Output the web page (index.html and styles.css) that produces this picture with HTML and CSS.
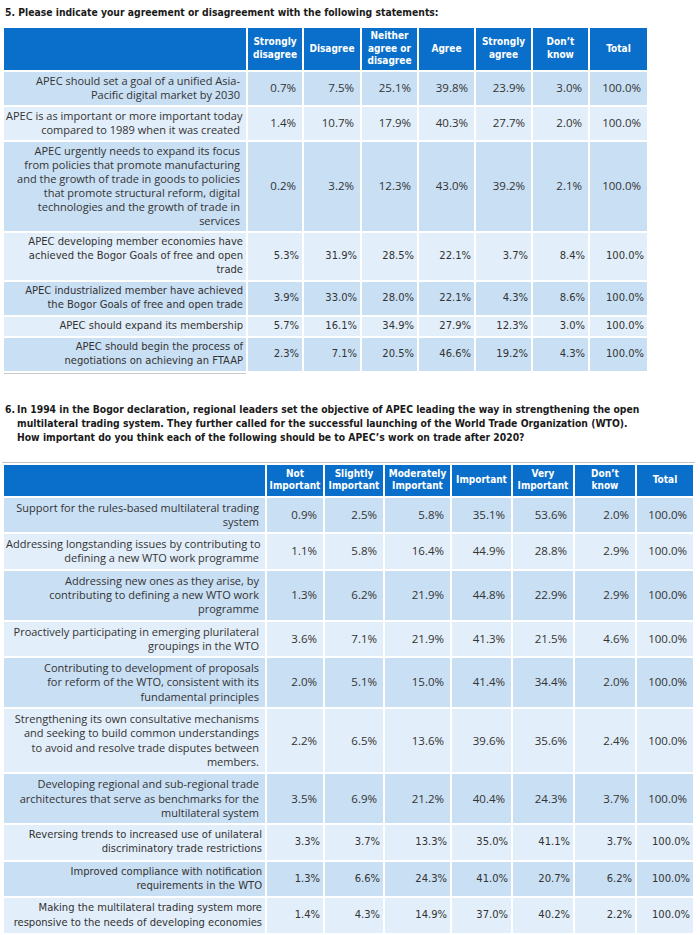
FILE: index.html
```html
<!DOCTYPE html>
<html>
<head>
<meta charset="utf-8">
<link rel="stylesheet" href="styles.css">
</head>
<body>
<h2 class="q-title q5">5. Please indicate your agreement or disagreement with the following statements:</h2>
<table class="survey t1">
  <colgroup>
    <col class="c-label1"><col style="width:54px"><col style="width:56px"><col style="width:55px"><col style="width:55px"><col style="width:55px"><col style="width:55px"><col style="width:57px">
  </colgroup>
  <thead>
    <tr class="head">
      <th></th><th>Strongly<br>disagree</th><th>Disagree</th><th>Neither<br>agree or<br>disagree</th><th>Agree</th><th>Strongly<br>agree</th><th>Don’t<br>know</th><th>Total</th>
    </tr>
  </thead>
  <tbody>
    <tr class="dk"><td class="lbl">APEC should set a goal of a unified Asia-<br>Pacific digital market by 2030</td><td>0.7%</td><td>7.5%</td><td>25.1%</td><td>39.8%</td><td>23.9%</td><td>3.0%</td><td>100.0%</td></tr>
    <tr class="lt"><td class="lbl">APEC is as important or more important today<br>compared to 1989 when it was created</td><td>1.4%</td><td>10.7%</td><td>17.9%</td><td>40.3%</td><td>27.7%</td><td>2.0%</td><td>100.0%</td></tr>
    <tr class="dk"><td class="lbl">APEC urgently needs to expand its focus<br>from policies that promote manufacturing<br>and the growth of trade in goods to policies<br>that promote structural reform, digital<br>technologies and the growth of trade in<br>services</td><td>0.2%</td><td>3.2%</td><td>12.3%</td><td>43.0%</td><td>39.2%</td><td>2.1%</td><td>100.0%</td></tr>
    <tr class="lt cond"><td class="lbl">APEC developing member economies have<br>achieved the Bogor Goals of free and open<br>trade</td><td>5.3%</td><td>31.9%</td><td>28.5%</td><td>22.1%</td><td>3.7%</td><td>8.4%</td><td>100.0%</td></tr>
    <tr class="dk cond"><td class="lbl">APEC industrialized member have achieved<br>the Bogor Goals of free and open trade</td><td>3.9%</td><td>33.0%</td><td>28.0%</td><td>22.1%</td><td>4.3%</td><td>8.6%</td><td>100.0%</td></tr>
    <tr class="lt cond"><td class="lbl">APEC should expand its membership</td><td>5.7%</td><td>16.1%</td><td>34.9%</td><td>27.9%</td><td>12.3%</td><td>3.0%</td><td>100.0%</td></tr>
    <tr class="dk cond"><td class="lbl">APEC should begin the process of<br>negotiations on achieving an FTAAP</td><td>2.3%</td><td>7.1%</td><td>20.5%</td><td>46.6%</td><td>19.2%</td><td>4.3%</td><td>100.0%</td></tr>
  </tbody>
</table>
<div class="rule"></div>

<div class="q-title q6">
  <span class="qnum">6.</span>
  <span class="qtext">In 1994 in the Bogor declaration, regional leaders set the objective of APEC leading the way in strengthening the open<br>multilateral trading system. They further called for the successful launching of the World Trade Organization (WTO).<br>How important do you think each of the following should be to APEC’s work on trade after 2020?</span>
</div>

<table class="survey t2">
  <colgroup>
    <col class="c-label2"><col style="width:56px"><col style="width:58px"><col style="width:65px"><col style="width:59px"><col style="width:60px"><col style="width:60px"><col style="width:56px">
  </colgroup>
  <thead>
    <tr class="head">
      <th></th><th>Not<br>Important</th><th>Slightly<br>Important</th><th>Moderately<br>Important</th><th>Important</th><th>Very<br>Important</th><th>Don’t<br>know</th><th>Total</th>
    </tr>
  </thead>
  <tbody>
    <tr class="dk"><td class="lbl">Support for the rules-based multilateral trading<br>system</td><td>0.9%</td><td>2.5%</td><td>5.8%</td><td>35.1%</td><td>53.6%</td><td>2.0%</td><td>100.0%</td></tr>
    <tr class="lt"><td class="lbl">Addressing longstanding issues by contributing to<br>defining a new WTO work programme</td><td>1.1%</td><td>5.8%</td><td>16.4%</td><td>44.9%</td><td>28.8%</td><td>2.9%</td><td>100.0%</td></tr>
    <tr class="dk"><td class="lbl">Addressing new ones as they arise, by<br>contributing to defining a new WTO work<br>programme</td><td>1.3%</td><td>6.2%</td><td>21.9%</td><td>44.8%</td><td>22.9%</td><td>2.9%</td><td>100.0%</td></tr>
    <tr class="lt"><td class="lbl">Proactively participating in emerging plurilateral<br>groupings in the WTO</td><td>3.6%</td><td>7.1%</td><td>21.9%</td><td>41.3%</td><td>21.5%</td><td>4.6%</td><td>100.0%</td></tr>
    <tr class="dk"><td class="lbl">Contributing to development of proposals<br>for reform of the WTO, consistent with its<br>fundamental principles</td><td>2.0%</td><td>5.1%</td><td>15.0%</td><td>41.4%</td><td>34.4%</td><td>2.0%</td><td>100.0%</td></tr>
    <tr class="lt"><td class="lbl">Strengthening its own consultative mechanisms<br>and seeking to build common understandings<br>to avoid and resolve trade disputes between<br>members.</td><td>2.2%</td><td>6.5%</td><td>13.6%</td><td>39.6%</td><td>35.6%</td><td>2.4%</td><td>100.0%</td></tr>
    <tr class="dk"><td class="lbl">Developing regional and sub-regional trade<br>architectures that serve as benchmarks for the<br>multilateral system</td><td>3.5%</td><td>6.9%</td><td>21.2%</td><td>40.4%</td><td>24.3%</td><td>3.7%</td><td>100.0%</td></tr>
    <tr class="lt cond"><td class="lbl">Reversing trends to increased use of unilateral<br>discriminatory trade restrictions</td><td>3.3%</td><td>3.7%</td><td>13.3%</td><td>35.0%</td><td>41.1%</td><td>3.7%</td><td>100.0%</td></tr>
    <tr class="dk cond"><td class="lbl">Improved compliance with notification<br>requirements in the WTO</td><td>1.3%</td><td>6.6%</td><td>24.3%</td><td>41.0%</td><td>20.7%</td><td>6.2%</td><td>100.0%</td></tr>
    <tr class="lt cond"><td class="lbl">Making the multilateral trading system more<br>responsive to the needs of developing economies</td><td>1.4%</td><td>4.3%</td><td>14.9%</td><td>37.0%</td><td>40.2%</td><td>2.2%</td><td>100.0%</td></tr>
  </tbody>
</table>
</body>
</html>
```
FILE: styles.css
```css
html, body {
  margin: 0;
  background: #ffffff;
}
body {
  padding: 0 4px;
  font-family: "Open Sans", "Noto Sans", sans-serif;
  color: #333333;
}
.q-title {
  font-family: "DejaVu Sans Condensed", "DejaVu Sans", sans-serif;
  font-stretch: condensed;
  font-weight: bold;
  font-size: 10.3px;
  line-height: 14px;
  color: #1a1a1a;
  margin: 0;
}
.q5 {
  padding-top: 5px;
  margin-left: 1px;
}
.q6 {
  display: flex;
  margin-top: 28px;
  margin-left: 1px;
}
.qnum {
  width: 12px;
  flex: none;
}
.qtext {
  white-space: nowrap;
  line-height: 14px;
}
.survey {
  border-collapse: separate;
  border-spacing: 2px;
  table-layout: fixed;
  margin-left: -2px;
}
.t1 {
  width: 645px;
  margin-top: 7px;
}
.t2 {
  width: 691px;
  margin-top: 18px;
  border-top: 1px solid #c4c4c4;
}
.c-label1 { width: 242px; }
.c-label2 { width: 261px; }
.head th {
  background: #0a6fca;
  color: #ffffff;
  font-family: "DejaVu Sans Condensed", "DejaVu Sans", sans-serif;
  font-stretch: condensed;
  font-weight: bold;
  font-size: 10px;
  line-height: 12.5px;
  text-align: center;
  vertical-align: middle;
  padding: 2px 1px;
}
.t1 .head th { height: 37px; }
.t2 .head th { height: 23px; padding-top: 3px; padding-bottom: 3px; }
.survey td {
  font-size: 11.5px;
  line-height: 14px;
  text-align: right;
  vertical-align: middle;
  white-space: nowrap;
  padding: 2px 6px 3px 2px;
}
.survey td.lbl {
  font-size: 11px;
}
.t2 td {
  line-height: 14.3px;
  padding-top: 3px;
  padding-bottom: 3px;
}
.dk td { background: #c9dff3; }
.lt td { background: #e2eef9; }
.survey .cond td {
  font-family: "DejaVu Sans Condensed", "DejaVu Sans", sans-serif;
  font-stretch: condensed;
  font-size: 11.1px;
  padding-right: 3px;
}
.rule {
  width: 242px;
  height: 1px;
  background: #c8c8c8;
}
```
